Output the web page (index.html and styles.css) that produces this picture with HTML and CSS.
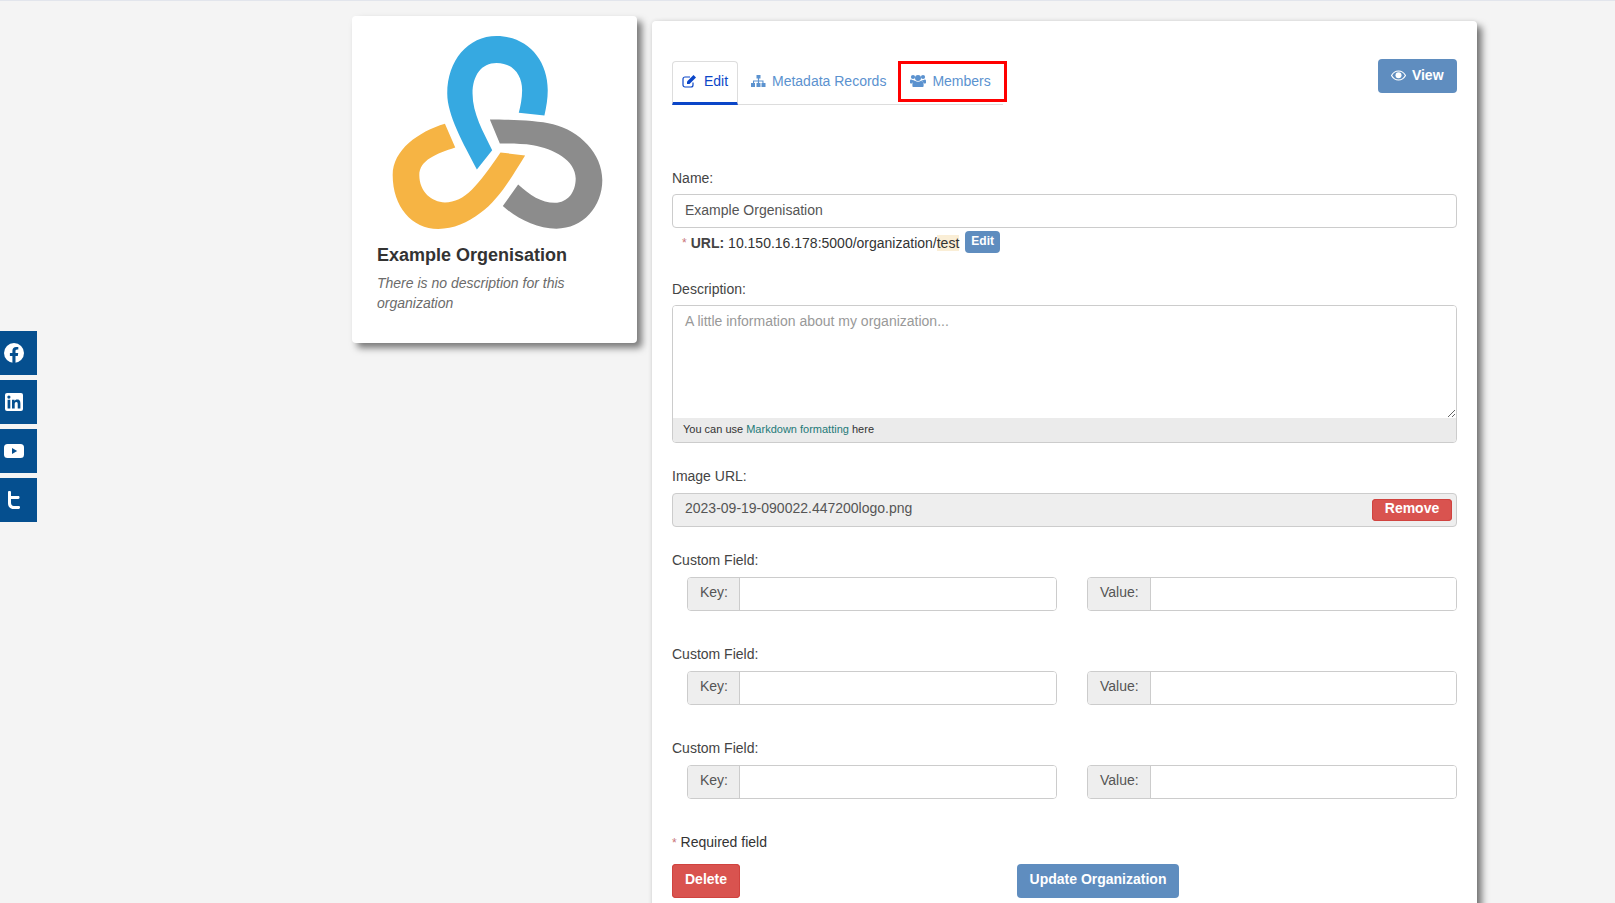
FILE: index.html
```html
<!DOCTYPE html>
<html>
<head>
    <title>Edit Organization</title>
    <link rel="stylesheet" href="styles.css">
</head>
<body>
    <ul class="social">
        <li><a href="#"><svg width="20" height="20" viewBox="0 0 20 20"><circle cx="10" cy="10" r="10" fill="#fff"/><path d="M8.4 20v-7H5.9v-3h2.5V7.8c0-2.5 1.5-3.9 3.7-3.9 1.1 0 2.2.2 2.2.2v2.5h-1.2c-1.2 0-1.6.8-1.6 1.5V10h2.7l-.4 3h-2.3v7z" fill="#054f8f"/></svg></a></li>
        <li><a href="#"><svg width="18" height="18" viewBox="0 0 18 18"><rect width="18" height="18" rx="2" fill="#fff"/><path d="M2.6 6.8h2.7v8.6H2.6zM3.9 2.5a1.6 1.6 0 1 1 0 3.2 1.6 1.6 0 0 1 0-3.2zM7 6.8h2.5V8c.4-.7 1.3-1.4 2.7-1.4 2.7 0 3.2 1.8 3.2 4.1v4.7h-2.7v-4.2c0-1 0-2.3-1.4-2.3s-1.6 1.1-1.6 2.2v4.3H7z" fill="#054f8f"/></svg></a></li>
        <li><a href="#"><svg width="20" height="14" viewBox="0 0 20 14"><rect width="20" height="14" rx="3.5" fill="#fff"/><path d="M8 4l5.2 3L8 10z" fill="#054f8f"/></svg></a></li>
        <li><a href="#"><svg width="12" height="18" viewBox="0 0 12 18"><path d="M0 1.200C0 .5.500 0 1.200 0h.6C2.500 0 3 .5 3 1.200V5h7.300c.7 0 1.200.5 1.200 1.200v.6c0 .7-.5 1.200-1.200 1.200H3v3.500C3 13.700 4 15 5.800 15h4.900c.7 0 1.300.5 1.300 1.200v.6c0 .7-.6 1.200-1.300 1.200H5.500C2 18 0 15.600 0 12z" fill="#fff"/></svg></a></li>
    </ul>

    <div class="page">
        <aside class="org-card">
            <svg class="org-logo" width="211" height="193" viewBox="158 107 630 580">
                <path fill="#36a9e1" d="M411 508L457 450C430 395 398 340 398 280C398 225 425 188 470 188C520 188 547 225 547 270C547 295 542 318 537 338L614 346C620 320 624 295 624 270C624 175 560 107 470 107C385 107 322 180 322 280C322 345 370 430 411 508Z"/>
                <path fill="#f6b444" d="M315 371L346 442C290 460 238 480 238 525C238 575 275 607 315 607C375 607 415 555 482 457L556 466C510 540 475 600 420 640C385 668 340 687 295 687C215 687 158 620 158 525C158 450 235 395 315 371Z"/>
                <path fill="#8c8c8c" d="M450 358C500 358 590 360 640 372C720 392 788 460 788 540C788 620 730 686 650 686C590 686 530 655 489 618L535 553C570 585 605 608 645 608C685 608 708 575 708 535C708 480 640 445 580 435C545 430 510 430 480 430Z"/>
            </svg>
            <h1 class="org-name">Example Orgenisation</h1>
            <p class="org-desc">There is no description for this organization</p>
        </aside>

        <main class="panel">
            <div class="panel-head">
                <ul class="tabs">
                    <li class="tab tab-active"><a href="#">
                        <svg width="15" height="14" viewBox="0 0 15 14"><path d="M11 8.500V11a2 2 0 0 1-2 2H3a2 2 0 0 1-2-2V5a2 2 0 0 1 2-2h5" fill="none" stroke="currentColor" stroke-width="1.200"/><path d="M5 7.500L11.500 1 14 3.500 7.500 10H5z" fill="currentColor"/></svg>
                        Edit</a></li>
                    <li class="tab"><a href="#">
                        <svg width="15" height="13" viewBox="0 0 15 13"><path d="M5.500 0h4v3.500h-1.400v2h4.400v2.500h2v4h-4V8h.9V6.500H8.100V8h1.400v4h-4V8h1.400V6.500H3.100V8h.9v4H0V8h2V5.500h4.900v-2H5.500z" fill="currentColor"/></svg>
                        Metadata Records</a></li>
                    <li class="tab tab-marked"><a href="#">
                        <svg width="16" height="13" viewBox="0 0 16 13"><circle cx="3" cy="3" r="2.100" fill="currentColor"/><circle cx="13" cy="3" r="2.100" fill="currentColor"/><circle cx="8" cy="4" r="3" fill="currentColor"/><path d="M3.300 13c-.5 0-.9-.5-.9-1V10c0-2 1-3.200 2.600-3.200.8.700 1.900 1 3 1s2.200-.3 3-1c1.600 0 2.600 1.200 2.600 3.200v2c0 .5-.4 1-.9 1zM0 6.800C0 6 .6 5.500 1.300 5.500c.6.500 1.200.7 2 .7.400 0 .7 0 1 .1-.1.300-.1.600 0 1-1.200.3-2 1.100-2.400 2.200H.8C.3 9.500 0 9.100 0 8.700zM16 6.800c0-.8-.6-1.300-1.300-1.300-.6.500-1.200.7-2 .7-.4 0-.7 0-1 .1.100.3.100.6 0 1 1.200.3 2 1.100 2.400 2.200h1.100c.5 0 .8-.4.800-.8z" fill="currentColor"/></svg>
                        Members</a></li>
                </ul>
                <a class="btn btn-blue" href="#">
                    <svg class="eye" width="15" height="11" viewBox="0 0 15 11"><path d="M7.500 1C4.500 1 2 2.800.5 5.500 2 8.200 4.500 10 7.500 10s5.500-1.800 7-4.500C13 2.800 10.500 1 7.500 1z" fill="none" stroke="#fff" stroke-width="1.200"/><circle cx="7.500" cy="5.300" r="3" fill="#fff"/></svg>
                    View</a>
            </div>

            <form class="org-form">
                <label class="label label-name">Name:</label>
                <input class="input" type="text" value="Example Orgenisation">
                <div class="slug">
                    <span class="star">*</span>
                    <strong>URL:</strong>
                    <span>10.150.16.178:5000/organization/<mark class="slug-end">test</mark></span>
                    <a class="btn btn-blue btn-mini" href="#">Edit</a>
                </div>

                <label class="label label-desc">Description:</label>
                <div class="markdown">
                    <textarea class="markdown-text" placeholder="A little information about my organization..."></textarea>
                    <div class="markdown-note">You can use <a href="#">Markdown formatting</a> here</div>
                </div>

                <label class="label label-next">Image URL:</label>
                <div class="image-url">
                    <span>2023-09-19-090022.447200logo.png</span>
                    <a class="btn btn-red btn-remove" href="#">Remove</a>
                </div>

                <label class="label label-next">Custom Field:</label>
                <div class="custom-row">
                    <div class="group"><span class="addon">Key:</span><input class="group-input" type="text"></div>
                    <div class="group"><span class="addon">Value:</span><input class="group-input" type="text"></div>
                </div>

                <label class="label label-custom">Custom Field:</label>
                <div class="custom-row">
                    <div class="group"><span class="addon">Key:</span><input class="group-input" type="text"></div>
                    <div class="group"><span class="addon">Value:</span><input class="group-input" type="text"></div>
                </div>

                <label class="label label-custom">Custom Field:</label>
                <div class="custom-row">
                    <div class="group"><span class="addon">Key:</span><input class="group-input" type="text"></div>
                    <div class="group"><span class="addon">Value:</span><input class="group-input" type="text"></div>
                </div>

                <p class="required"><span class="star">*</span> Required field</p>
                <div class="actions">
                    <a class="btn btn-red btn-delete" href="#">Delete</a>
                    <a class="btn btn-blue btn-update" href="#">Update Organization</a>
                </div>
            </form>
        </main>
    </div>
</body>
</html>
```

FILE: styles.css
```css
html, body {
    height: 100%;
    overflow: hidden;
}
body {
    margin: 0;
    padding: 0;
    background-color: #f4f4f4;
    border-top: 1px solid #e2e5ec;
    box-sizing: border-box;
    font-family: "Liberation Sans", Arial, sans-serif;
    font-size: 14px;
    line-height: 20px;
    color: #444;
}
a {
    text-decoration: none;
}
ul {
    margin: 0;
    padding: 0;
    list-style: none;
}

.social {
    position: fixed;
    left: 0;
    top: 331px;
    display: flex;
    flex-direction: column;
    gap: 5px;
}
.social a {
    display: flex;
    align-items: center;
    justify-content: center;
    width: 37px;
    height: 44px;
    padding-right: 9px;
    box-sizing: border-box;
    background-color: #054f8f;
}

.page {
    display: flex;
    align-items: flex-start;
    gap: 15px;
    padding: 15px 0 0 352px;
}

.org-card {
    width: 285px;
    height: 327px;
    box-sizing: border-box;
    padding: 20px 25px 0;
    background-color: #fff;
    border-radius: 4px;
    box-shadow: 5px 5px 7px rgba(0, 0, 0, 0.5);
}
.org-logo {
    display: block;
    margin-left: 15px;
}
.org-name {
    margin: 14px 0 0;
    font-size: 18px;
    line-height: 24px;
    color: #333;
}
.org-desc {
    margin: 6px 0 0;
    font-style: italic;
    color: #6b6b6b;
}

.panel {
    width: 825px;
    margin-top: 5px;
    box-sizing: border-box;
    padding: 40px 20px 30px;
    background-color: #fff;
    border-radius: 4px;
    box-shadow: 5px 5px 7px rgba(0, 0, 0, 0.5), 0 0 4px rgba(0, 0, 0, 0.1);
}
.panel-head {
    display: flex;
    align-items: flex-start;
    justify-content: space-between;
}

.tabs {
    display: flex;
    width: 331px;
    height: 44px;
    box-sizing: border-box;
    border-bottom: 1px solid #ddd;
}
.tab {
    flex: none;
    height: 44px;
    box-sizing: border-box;
}
.tab a {
    display: flex;
    align-items: center;
    gap: 6px;
    height: 40px;
    padding: 0 10px;
    color: #5b92cf;
    white-space: nowrap;
}
.tab svg {
    flex: none;
}
.tab-active {
    width: 66px;
    margin-right: 3px;
    border: 1px solid #ddd;
    border-bottom: 3px solid #0b46c8;
    border-radius: 4px 4px 0 0;
    background-color: #fff;
}
.tab-active a {
    gap: 7px;
    padding: 0 9px;
    height: 37px;
    color: #0b46c8;
}
.tab-marked {
    height: 41px;
    margin-left: 2px;
    border: 3px solid #f00;
}
.tab-marked a {
    height: 33px;
    padding: 0 13px 0 9px;
}

.btn {
    display: inline-block;
    padding: 5px 12px 9px;
    border-radius: 4px;
    font-weight: bold;
    color: #fff;
}
.btn-blue {
    background-color: #5f8dbf;
}
.btn-red {
    background-color: #d9534f;
    box-shadow: inset 0 0 0 1px #d0433f;
}
.panel-head .btn {
    margin-top: -2px;
    width: 79px;
    box-sizing: border-box;
    padding: 6px 0 8px 13px;
    white-space: nowrap;
}
.eye {
    margin-right: 2px;
    vertical-align: -1px;
}
.btn-mini {
    margin: -2px 0 0 2px;
    padding: 0 6px 2px;
    font-size: 12px;
}
.btn-delete {
    width: 68px;
    box-sizing: border-box;
    text-align: center;
}
.btn-update {
    width: 162px;
    box-sizing: border-box;
    margin-left: 277px;
    padding-left: 0;
    padding-right: 0;
    text-align: center;
}

.org-form {
    margin-top: 63px;
}
.label {
    display: block;
    margin-bottom: 7px;
}
.label-name {
    margin-bottom: 6px;
}
.label-desc {
    margin-top: 26px;
    margin-bottom: 6px;
}
.label-next {
    margin-top: 23px;
}
.label-custom {
    margin-top: 33px;
}
.input {
    display: block;
    width: 100%;
    height: 34px;
    box-sizing: border-box;
    padding: 0 12px 2px;
    border: 1px solid #ccc;
    border-radius: 4px;
    font: inherit;
    color: #555;
}
.slug {
    display: flex;
    align-items: center;
    gap: 4px;
    height: 20px;
    margin-top: 5px;
    padding-left: 10px;
    color: #333;
}
.slug strong {
    color: #444;
}
.slug-end {
    background-color: #faeed6;
    color: inherit;
}
.star {
    color: #c9747a;
    font-size: 12px;
}

.markdown {
    border: 1px solid #ccc;
    border-radius: 4px;
    overflow: hidden;
}
.markdown-text {
    display: block;
    width: 100%;
    height: 112px;
    box-sizing: border-box;
    padding: 5px 12px;
    border: 0;
    outline: 0;
    font: inherit;
    color: #555;
    resize: vertical;
}
.markdown-text::placeholder {
    color: #999;
}
.markdown-note {
    height: 24px;
    padding-left: 10px;
    background-color: #ebebeb;
    font-size: 11px;
    line-height: 23px;
    color: #333;
}
.markdown-note a {
    color: #1d7a78;
}

.image-url {
    display: flex;
    align-items: center;
    justify-content: space-between;
    height: 34px;
    box-sizing: border-box;
    padding: 0 4px 0 12px;
    background-color: #eee;
    border: 1px solid #ccc;
    border-radius: 4px;
    color: #555;
}
.image-url span {
    margin-bottom: 5px;
}
.btn-remove {
    width: 80px;
    box-sizing: border-box;
    padding: 0;
    height: 22px;
    line-height: 19px;
    text-align: center;
}

.custom-row {
    display: grid;
    grid-template-columns: 370px 370px;
    gap: 30px;
    margin-left: 15px;
}
.group {
    display: flex;
    height: 34px;
    box-sizing: border-box;
    border: 1px solid #ccc;
    border-radius: 4px;
    overflow: hidden;
}
.addon {
    padding: 4px 11px 0 12px;
    background-color: #eee;
    border-right: 1px solid #ccc;
    color: #555;
}
.group-input {
    flex: 1;
    min-width: 0;
    border: 0;
    outline: 0;
    padding: 0 12px;
    font: inherit;
}

.required {
    margin: 33px 0 0;
    color: #333;
}
.actions {
    display: flex;
    margin-top: 11px;
}
```
